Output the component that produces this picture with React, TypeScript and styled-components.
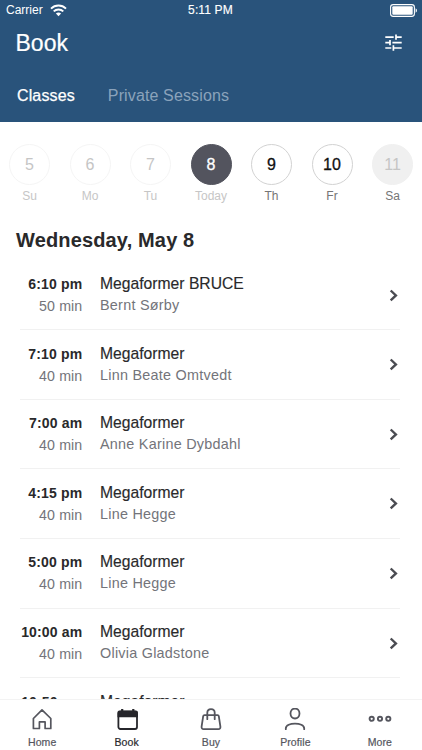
import React from "react";
import styled, { createGlobalStyle } from "styled-components";

const GlobalStyle = createGlobalStyle`
  * { box-sizing: border-box; }
  body { margin: 0; background: #fff; }
  svg { display: block; }
`;

const Screen = styled.div`
  width: 422px;
  height: 750px;
  display: flex;
  flex-direction: column;
  overflow: hidden;
  background: #fff;
  font-family: "Liberation Sans", Arial, Helvetica, sans-serif;
  white-space: nowrap;
`;

const Header = styled.header`
  height: 122px;
  flex: none;
  background: #29537b;
  color: #fff;
`;

const StatusBar = styled.div`
  display: grid;
  grid-template-columns: 1fr auto 1fr;
  align-items: center;
  height: 20px;
  padding: 0 5px 0 6px;
  font-size: 12px;
  line-height: 20px;
`;

const Clock = styled.span`
  letter-spacing: 0.15px;
  margin-right: 2px;
  -webkit-text-stroke: 0.15px #fff;
`;

const Carrier = styled.div`
  display: flex;
  align-items: center;
  gap: 7px;
`;

const BatterySlot = styled.div`
  display: flex;
  justify-content: flex-end;
`;

const TitleBar = styled.div`
  display: flex;
  align-items: center;
  justify-content: space-between;
  height: 45px;
  padding: 0 20px 0 15.5px;
`;

const Title = styled.h1`
  margin: 0;
  font-size: 23px;
  line-height: 26px;
  font-weight: 400;
  -webkit-text-stroke: 0.2px #fff;
`;

const TabRow = styled.nav`
  display: flex;
  gap: 33px;
  padding: 21px 17px 0;
`;

const TopTab = styled.span<{ $active?: boolean }>`
  font-size: 16px;
  line-height: 20px;
  letter-spacing: 0.13px;
  color: ${(p) => (p.$active ? "#fff" : "#8ba3bb")};
  -webkit-text-stroke: ${(p) => (p.$active ? "0.25px #fff" : "0")};
`;

const Week = styled.div`
  display: flex;
  flex: none;
  justify-content: space-between;
  padding: 22px 9px 0 9px;
`;

type DayKind = "past" | "today" | "open" | "closed";

const circleStyles: Record<DayKind, string> = {
  past: "color:#c5c5c5;border-color:#f5f5f5;background:#fff;",
  today: "color:#fff;border-color:#53545e;background:#53545e;-webkit-text-stroke:0.3px #fff;",
  open: "color:#111;border-color:#d2d2d2;background:#fff;-webkit-text-stroke:0.3px #111;",
  closed: "color:#c5c5c5;border-color:#f0f0f0;background:#f0f0f0;",
};

const Day = styled.div<{ $muted: boolean }>`
  display: flex;
  flex-direction: column;
  align-items: center;
  width: 41px;
  font-size: 12px;
  line-height: 22px;
  color: ${(p) => (p.$muted ? "#c6c6c6" : "#757575")};
`;

const DayCircle = styled.div<{ $kind: DayKind }>`
  display: flex;
  align-items: center;
  justify-content: center;
  width: 41px;
  height: 41px;
  border: 1px solid;
  border-radius: 50%;
  font-size: 16px;
  line-height: 20px;
  ${(p) => circleStyles[p.$kind]}
`;

const DateHeading = styled.h2`
  flex: none;
  margin: 20px 0 0 16px;
  height: 32px;
  font-size: 20px;
  line-height: 26px;
  letter-spacing: 0.15px;
  color: #29292b;
`;

const ClassList = styled.div`
  flex: 1;
  min-height: 0;
  overflow: hidden;
  padding: 1.6px 22px 0 20px;
`;

const ClassRow = styled.div`
  display: grid;
  grid-template-columns: 62.3px 1fr auto;
  column-gap: 17.7px;
  height: 69.6px;
  padding-top: 12.5px;
  border-bottom: 1px solid #f1f1f1;
`;

const TimeColumn = styled.div`
  display: flex;
  flex-direction: column;
  align-items: flex-end;
`;

const Time = styled.span`
  font-size: 14px;
  line-height: 22px;
  letter-spacing: 0.15px;
  font-weight: 700;
  color: #29292b;
`;

const Duration = styled.span`
  font-size: 14.2px;
  line-height: 22px;
  letter-spacing: 0.1px;
  color: #73747a;
`;

const Info = styled.div`
  display: flex;
  flex-direction: column;
`;

const ClassName = styled.span`
  font-size: 15.7px;
  line-height: 22px;
  color: #29292b;
  -webkit-text-stroke: 0.15px #29292b;
`;

const Teacher = styled.span`
  font-size: 14.4px;
  line-height: 21px;
  letter-spacing: 0.25px;
  color: #73747a;
`;

const ChevronSlot = styled.div`
  padding: 15.5px 2px 0 0;
`;

const BottomBar = styled.nav`
  display: grid;
  grid-template-columns: repeat(5, 1fr);
  flex: none;
  height: 51px;
  border-top: 1px solid #f3f3f3;
  background: #fff;
`;

const BottomTab = styled.div<{ $active: boolean }>`
  display: flex;
  flex-direction: column;
  align-items: center;
  padding-top: 8px;
  gap: 2px;
  font-size: 10.5px;
  line-height: 14px;
  letter-spacing: 0.1px;
  color: ${(p) => (p.$active ? "#29292d" : "#55565e")};
  -webkit-text-stroke: 0.2px currentColor;
`;

const WifiIcon = () => (
  <svg width="17" height="13" viewBox="0 0 17 13" fill="none" stroke="#fff" strokeWidth="1.9">
    <path d="M1 4.6C5.1.4 11.9.4 16 4.6M3.7 7.4c2.7-2.6 6.9-2.6 9.6 0" />
    <path d="M5.9 9.6c1.5-1.4 3.7-1.4 5.2 0l-2.6 2.6z" fill="#fff" stroke="none" />
  </svg>
);

const BatteryIcon = () => (
  <svg width="27" height="13" viewBox="0 0 27 13">
    <rect x="0.6" y="0.6" width="23.8" height="11.8" rx="2.6" fill="none" stroke="#fff" strokeWidth="1.1" />
    <rect x="2.3" y="2.3" width="20.4" height="8.4" rx="1" fill="#fff" />
    <path d="M25.6 4.3c1.8.8 1.8 3.6 0 4.4z" fill="#fff" />
  </svg>
);

const FilterIcon = () => (
  <svg width="18" height="18" viewBox="0 0 18 18" stroke="#fff" strokeWidth="1.7" fill="none">
    <path d="M1.3 3.1h8.4M12 3.1h5.7M12 .4v5.4M1.3 8.6h4.9M8.4 8.6h9.3M6 5.9v5.4M1.3 14h6M9.4 14h8.3M9.4 11.3v5.4" />
  </svg>
);

const Chevron = () => (
  <svg width="9" height="13" viewBox="0 0 9 13" fill="none" stroke="#4b4c52" strokeWidth="2.4">
    <path d="M1.7 1.5 6.9 6.4 1.7 11.3" />
  </svg>
);

const HomeIcon = () => (
  <svg width="24" height="25" viewBox="0 0 24 25" fill="none" stroke="#55565e" strokeWidth="1.7" strokeLinejoin="round">
    <path d="M3.4 10.5 12 1.8l8.8 8.7v10h-5.7v-6.6H9.4v6.6h-6z" />
  </svg>
);

const CalendarIcon = () => (
  <svg width="24" height="25" viewBox="0 0 24 25">
    <rect x="3.4" y="3.6" width="18.6" height="17.4" rx="2" fill="none" stroke="#26262b" strokeWidth="1.8" />
    <path d="M2.5 4.5c0-1.2.8-2 2-2h1.6V1h2.2v1.5h8.9V1h2.2v1.5h1.5c1.2 0 2 .8 2 2V9.2H2.5z" fill="#26262b" />
  </svg>
);

const BagIcon = () => (
  <svg width="24" height="25" viewBox="0 0 24 25" fill="none" stroke="#55565e" strokeWidth="1.8" strokeLinejoin="round" strokeLinecap="round">
    <path d="M5.4 7.2h13.2q1 0 1.2 1l1.6 10.5c.2 1.5-.6 2.4-2 2.4H4.6c-1.4 0-2.2-.9-2-2.4L4.2 8.2q.2-1 1.2-1z" />
    <path d="M8.3 11.2V4.7c0-4.8 7.4-4.8 7.4 0v6.5" />
  </svg>
);

const ProfileIcon = () => (
  <svg width="24" height="25" viewBox="0 0 24 25" fill="none" stroke="#55565e" strokeWidth="1.8" strokeLinecap="round">
    <ellipse cx="12" cy="5.5" rx="4.5" ry="5" />
    <path d="M2.8 21.2v-.8c0-6.4 18.4-6.4 18.4 0v.8" />
  </svg>
);

const MoreIcon = () => (
  <svg width="24" height="25" viewBox="0 0 24 25" fill="none" stroke="#55565e" strokeWidth="1.9">
    <circle cx="3.7" cy="10.8" r="2.1" />
    <circle cx="12" cy="10.8" r="2.1" />
    <circle cx="20.3" cy="10.8" r="2.1" />
  </svg>
);

const days: { date: number; label: string; kind: DayKind }[] = [
  { date: 5, label: "Su", kind: "past" },
  { date: 6, label: "Mo", kind: "past" },
  { date: 7, label: "Tu", kind: "past" },
  { date: 8, label: "Today", kind: "today" },
  { date: 9, label: "Th", kind: "open" },
  { date: 10, label: "Fr", kind: "open" },
  { date: 11, label: "Sa", kind: "closed" },
];

const classes = [
  { time: "6:10 pm", length: "50 min", name: "Megaformer BRUCE", teacher: "Bernt Sørby" },
  { time: "7:10 pm", length: "40 min", name: "Megaformer", teacher: "Linn Beate Omtvedt" },
  { time: "7:00 am", length: "40 min", name: "Megaformer", teacher: "Anne Karine Dybdahl" },
  { time: "4:15 pm", length: "40 min", name: "Megaformer", teacher: "Line Hegge" },
  { time: "5:00 pm", length: "40 min", name: "Megaformer", teacher: "Line Hegge" },
  { time: "10:00 am", length: "40 min", name: "Megaformer", teacher: "Olivia Gladstone" },
  { time: "10:50 am", length: "", name: "Megaformer", teacher: "" },
];

const tabs = [
  { label: "Home", Icon: HomeIcon },
  { label: "Book", Icon: CalendarIcon },
  { label: "Buy", Icon: BagIcon },
  { label: "Profile", Icon: ProfileIcon },
  { label: "More", Icon: MoreIcon },
];

export default function App() {
  return (
    <>
      <GlobalStyle />
      <Screen>
        <Header>
          <StatusBar>
            <Carrier>
              Carrier
              <WifiIcon />
            </Carrier>
            <Clock>5:11 PM</Clock>
            <BatterySlot>
              <BatteryIcon />
            </BatterySlot>
          </StatusBar>
          <TitleBar>
            <Title>Book</Title>
            <FilterIcon />
          </TitleBar>
          <TabRow>
            <TopTab $active>Classes</TopTab>
            <TopTab>Private Sessions</TopTab>
          </TabRow>
        </Header>
        <Week>
          {days.map((d) => (
            <Day key={d.date} $muted={d.kind === "past" || d.kind === "today"}>
              <DayCircle $kind={d.kind}>{d.date}</DayCircle>
              {d.label}
            </Day>
          ))}
        </Week>
        <DateHeading>Wednesday, May 8</DateHeading>
        <ClassList>
          {classes.map((c) => (
            <ClassRow key={c.time}>
              <TimeColumn>
                <Time>{c.time}</Time>
                <Duration>{c.length}</Duration>
              </TimeColumn>
              <Info>
                <ClassName>{c.name}</ClassName>
                <Teacher>{c.teacher}</Teacher>
              </Info>
              <ChevronSlot>
                <Chevron />
              </ChevronSlot>
            </ClassRow>
          ))}
        </ClassList>
        <BottomBar>
          {tabs.map(({ label, Icon }) => (
            <BottomTab key={label} $active={label === "Book"}>
              <Icon />
              {label}
            </BottomTab>
          ))}
        </BottomBar>
      </Screen>
    </>
  );
}
